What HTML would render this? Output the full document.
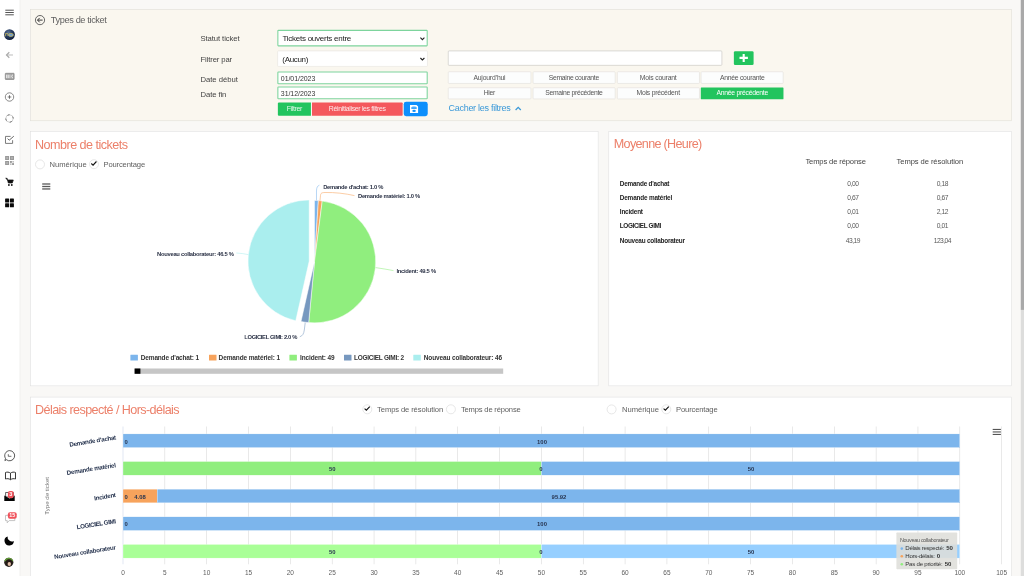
<!DOCTYPE html>
<html lang="fr"><head><meta charset="utf-8"><title>Types de ticket</title>
<style>
html,body{margin:0;padding:0;width:1024px;height:576px;overflow:hidden;background:#f9f8f6;}
body{font-family:"Liberation Sans",sans-serif;}
#app{position:absolute;left:0;top:0;width:1920px;height:1080px;transform:scale(0.533333);transform-origin:0 0;overflow:hidden;}
.t{position:absolute;white-space:pre;line-height:1;font-family:"Liberation Sans",sans-serif;will-change:opacity;}
.t.r{will-change:auto;}
.panel{position:absolute;background:#fff;border:1px solid #dcdcdc;box-sizing:border-box;}
.abs{position:absolute;}
svg{position:absolute;overflow:visible;}
</style></head>
<body>
<div id="app">
<div class="" style="position:absolute;left:0.0px;top:0.0px;width:38.06px;height:1080.0px;background:#fff;border-right:1px solid #e6e4e0;box-sizing:border-box;"></div><svg style="left:0;top:0" width="1920" height="1080" viewBox="0 0 1024 576"><defs><radialGradient id="gl" cx=".4" cy=".32" r=".75"><stop offset="0" stop-color="#5b7396"/><stop offset=".5" stop-color="#263b60"/><stop offset="1" stop-color="#0e1a33"/></radialGradient><clipPath id="av"><circle cx="8.8" cy="562.3" r="4.6"/></clipPath></defs><rect x="5.3" y="9.7" width="8.5" height="1" fill="#555"/><rect x="5.3" y="12.0" width="8.5" height="1" fill="#555"/><rect x="5.3" y="14.3" width="8.5" height="1" fill="#555"/><circle cx="9.5" cy="34.6" r="5.4" fill="url(#gl)"/><path d="M5.4 36.3V33.6H8.2M8.2 35H6.8" stroke="#d9c45a" stroke-width=".7" fill="none"/><ellipse cx="10.9" cy="34.9" rx="2.5" ry="1.5" fill="#6f9fd0" stroke="#d9c45a" stroke-width=".7"/><path d="M13 55 H6.6" stroke="#bdbdbd" stroke-width="1" fill="none"/><path d="M9.3 52.3 L6.5 55 L9.3 57.7" stroke="#aaa" stroke-width="1.2" fill="none"/><rect x="5.3" y="73.3" width="8.8" height="6.2" rx=".5" fill="#a4a4a4" stroke="#808080" stroke-width=".7"/><path d="M6.7 74.7V78.1M8.2 74.7V78.1" stroke="#fff" stroke-width=".85"/><path d="M9.9 74.7V78.1" stroke="#fff" stroke-width=".6"/><path d="M12.9 74.9C11.3 74.9 11.3 77.9 12.9 77.9" stroke="#fff" stroke-width=".8" fill="none"/><circle cx="9.5" cy="97" r="4.2" fill="none" stroke="#666" stroke-width=".75"/><path d="M9.5 95.2V98.8M7.7 97H11.3" stroke="#555" stroke-width=".8"/><circle cx="9.5" cy="118.5" r="3.7" fill="none" stroke="#bdbdbd" stroke-width=".7"/><circle cx="9.5" cy="118.5" r="3.7" fill="none" stroke="#6a6a6a" stroke-width="1" stroke-dasharray="2.1 3.712" stroke-dashoffset="2.49"/><path d="M12.6 140.2V143.4H5.5V136.4H10.6" fill="none" stroke="#666" stroke-width=".85"/><path d="M7.6 138.6l1.6 1.6L13.8 136.2" fill="none" stroke="#555" stroke-width=".9"/><g fill="#9a9a9a"><rect x="5.1" y="156" width="4" height="4"/><rect x="10" y="156" width="4" height="4"/><rect x="5.1" y="161" width="4" height="4"/><rect x="10" y="161" width="1.9" height="1.9"/><rect x="12.1" y="163.1" width="1.9" height="1.9"/><rect x="10" y="163.3" width="1.6" height="1.7" opacity=".6"/><rect x="12.3" y="161" width="1.7" height="1.6" opacity=".6"/></g><g fill="#bcbcbc"><rect x="6.3" y="157.2" width="1.6" height="1.6"/><rect x="11.2" y="157.2" width="1.6" height="1.6"/><rect x="6.3" y="162.2" width="1.6" height="1.6"/></g><path d="M5.7 178.3H7.1L8.3 183H12.3L13.3 180H7.6Z" fill="#111" stroke="#111" stroke-width=".7" stroke-linejoin="round"/><circle cx="8.9" cy="185" r=".9" fill="#111"/><circle cx="11.8" cy="185" r=".9" fill="#111"/><rect x="5.1" y="198.5" width="4" height="4" rx=".5" fill="#0a0a0a"/><rect x="9.9" y="198.5" width="4" height="4" rx=".5" fill="#0a0a0a"/><rect x="5.1" y="203.3" width="4" height="4" rx=".5" fill="#0a0a0a"/><rect x="9.9" y="203.3" width="4" height="4" rx=".5" fill="#0a0a0a"/><path d="M9.6 450.6a5.1 5.1 0 1 1 -3.2 9.1L4.9 460.6l.6-2.2A5.1 5.1 0 0 1 9.6 450.6Z" fill="#fff" stroke="#222" stroke-width=".75" stroke-linejoin="round"/><path d="M8.3 454.2V456.3H11.4" stroke="#333" stroke-width=".7" fill="none"/><path d="M10.5 473.2C9 471.9 7 471.9 5.5 472.5V479C7 478.5 9 478.5 10.5 479.7C12 478.5 14 478.5 15.5 479V472.5C14 471.9 12 471.9 10.5 473.2Z" fill="#fff" stroke="#222" stroke-width=".9" stroke-linejoin="round"/><path d="M10.5 473.2V479.7" stroke="#222" stroke-width=".9"/><path d="M5.6 492.5H13.4V497H5.6Z" fill="#fff" stroke="#222" stroke-width=".7"/><path d="M4.3 495.6L9.5 498.4L14.7 495.6V501.1H4.3Z" fill="#050505"/><rect x="7.9" y="491.1" width="5.8" height="7.1" rx="2" fill="#f0525b"/><path d="M5.5 515.4H14.8V520.6H9.2L7.2 522.8V520.6H5.5Z" fill="#fff" stroke="#b5b5b5" stroke-width=".8" stroke-linejoin="round"/><rect x="7.9" y="512.3" width="8.8" height="6.5" rx="2" fill="#f0525b"/><path d="M7.6 536.4A4.7 4.7 0 1 0 13.9 541A4.4 4.4 0 0 1 7.6 536.4Z" fill="#050505"/><g clip-path="url(#av)"><rect x="4" y="557" width="10" height="11" fill="#2b2420"/><rect x="4" y="557" width="10" height="4.2" fill="#5f9a36"/><circle cx="9" cy="562.6" r="3.3" fill="#241a16"/><ellipse cx="9.3" cy="564" rx="1.7" ry="2" fill="#e2bfa8"/></g></svg><span class="t" style="left:17.44px;top:921.91px;font-size:10.12px;font-weight:700;color:#fff;">3</span><span class="t" style="left:17.44px;top:961.10px;font-size:10.12px;font-weight:700;color:#fff;">15</span><div class="" style="position:absolute;left:56.62px;top:17.44px;width:1840.31px;height:209.81px;background:#faf7ef;border:1px solid #dddbd6;box-sizing:border-box;"></div><svg style="left:0;top:0" width="1920" height="1080" viewBox="0 0 1024 576"><circle cx="40" cy="20.1" r="4.6" fill="none" stroke="#444" stroke-width=".8"/><path d="M42.6 20.1H37.6M39.7 17.9L37.5 20.1L39.7 22.3" stroke="#333" stroke-width="1" fill="none"/></svg><span class="t" style="left:95.25px;top:30.43px;font-size:17.25px;letter-spacing:-0.708px;color:#606060;">Types de ticket</span><span class="t" style="left:375.94px;top:64.95px;font-size:14.44px;letter-spacing:-0.172px;color:#444;">Statut ticket</span><span class="t" style="left:375.94px;top:103.77px;font-size:14.44px;letter-spacing:-0.240px;color:#444;">Filtrer par</span><span class="t" style="left:375.94px;top:141.08px;font-size:14.44px;letter-spacing:-0.072px;color:#444;">Date début</span><span class="t" style="left:375.94px;top:168.64px;font-size:14.44px;letter-spacing:-0.178px;color:#444;">Date fin</span><div class="" style="position:absolute;left:520.12px;top:56.25px;width:282.38px;height:31.13px;background:#fff;border:2px solid #7dd49d;box-sizing:border-box;border-radius:2px;"></div><div class="" style="position:absolute;left:520.12px;top:95.25px;width:282.38px;height:29.62px;background:#fff;border:1px solid #e3e1dc;box-sizing:border-box;border-radius:2px;"></div><div class="" style="position:absolute;left:520.12px;top:133.5px;width:282.38px;height:24.38px;background:#fff;border:2px solid #7dd49d;box-sizing:border-box;border-radius:2px;"></div><div class="" style="position:absolute;left:520.12px;top:161.62px;width:282.38px;height:24.38px;background:#fff;border:2px solid #7dd49d;box-sizing:border-box;border-radius:2px;"></div><span class="t" style="left:529.69px;top:64.46px;font-size:15.00px;letter-spacing:-0.487px;color:#222;">Tickets ouverts entre</span><span class="t" style="left:529.31px;top:103.46px;font-size:15.00px;letter-spacing:-0.607px;color:#222;">(Aucun)</span><span class="t" style="left:526.50px;top:140.47px;font-size:13.12px;letter-spacing:-0.094px;color:#333;">01/01/2023</span><span class="t" style="left:526.50px;top:168.60px;font-size:13.12px;letter-spacing:-0.094px;color:#333;">31/12/2023</span><svg style="left:0;top:0" width="1920" height="1080" viewBox="0 0 1024 576"><path d="M420.4 37.6l2 2 2-2M420.4 58l2 2 2-2" stroke="#222" stroke-width="1.1" fill="none"/></svg><div class="" style="position:absolute;left:520.5px;top:191.62px;width:62.62px;height:25.87px;background:#22c45e;border-radius:2px 0 0 2px;"></div><div class="" style="position:absolute;left:584.62px;top:191.62px;width:170.62px;height:25.87px;background:#f4585c;border-radius:0 1.5px 1.5px 0;"></div><div class="" style="position:absolute;left:757.12px;top:191.25px;width:44.44px;height:26.25px;background:#0d8ffc;border-radius:4.5px;"></div><span class="t" style="left:537.61px;top:198.33px;font-size:12.94px;letter-spacing:-0.647px;color:rgba(255,255,255,.88);">Filtrer</span><span class="t" style="left:616.44px;top:198.33px;font-size:12.94px;letter-spacing:-0.598px;color:rgba(255,255,255,.88);">Réinitialiser les filtres</span><svg style="left:0;top:0" width="1920" height="1080" viewBox="0 0 1024 576"><path d="M410 105h6.5l1.6 1.6v6.4h-8.1z" fill="#fff"/><rect x="411.3" y="107.3" width="5.4" height="1.5" fill="#0d8ffc"/><rect x="412.3" y="106.2" width="3.4" height="1.1" fill="#0d8ffc" opacity=".45"/><ellipse cx="414.05" cy="110.95" rx="1.75" ry="1.15" fill="#0d8ffc"/></svg><div class="" style="position:absolute;left:840.0px;top:94.88px;width:513.75px;height:28.12px;background:#fff;border:1.5px solid #bdbbb7;box-sizing:border-box;border-radius:2px;"></div><div class="" style="position:absolute;left:1376.06px;top:95.72px;width:37.13px;height:26.16px;background:#22c45e;border-radius:2.5px;"></div><svg style="left:0;top:0" width="1920" height="1080" viewBox="0 0 1024 576"><path d="M743.7 53.9v8M739.5 57.9h8.4" stroke="#fff" stroke-width="2.1"/></svg><div class="" style="position:absolute;left:840.0px;top:134.06px;width:155.62px;height:22.69px;background:#fcfdfd;border:1px solid #dedcd8;box-sizing:border-box;border-radius:2px;"></div><span class="t" style="left:887.64px;top:140.12px;font-size:12.75px;letter-spacing:-0.345px;color:#555;">Aujourd’hui</span><div class="" style="position:absolute;left:840.0px;top:163.5px;width:155.62px;height:22.88px;background:#fcfdfd;border:1px solid #dedcd8;box-sizing:border-box;border-radius:2px;"></div><span class="t" style="left:907.15px;top:168.99px;font-size:12.75px;letter-spacing:-0.691px;color:#555;">Hier</span><div class="" style="position:absolute;left:999.0px;top:134.06px;width:154.5px;height:22.69px;background:#fcfdfd;border:1px solid #dedcd8;box-sizing:border-box;border-radius:2px;"></div><span class="t" style="left:1029.07px;top:140.12px;font-size:12.75px;letter-spacing:-0.608px;color:#555;">Semaine courante</span><div class="" style="position:absolute;left:999.0px;top:163.5px;width:154.5px;height:22.88px;background:#fcfdfd;border:1px solid #dedcd8;box-sizing:border-box;border-radius:2px;"></div><span class="t" style="left:1022.29px;top:168.99px;font-size:12.75px;letter-spacing:-0.574px;color:#555;">Semaine précédente</span><div class="" style="position:absolute;left:1156.88px;top:134.06px;width:154.88px;height:22.69px;background:#fcfdfd;border:1px solid #dedcd8;box-sizing:border-box;border-radius:2px;"></div><span class="t" style="left:1199.69px;top:140.12px;font-size:12.75px;letter-spacing:-0.341px;color:#555;">Mois courant</span><div class="" style="position:absolute;left:1156.88px;top:163.5px;width:154.88px;height:22.88px;background:#fcfdfd;border:1px solid #dedcd8;box-sizing:border-box;border-radius:2px;"></div><span class="t" style="left:1193.55px;top:168.99px;font-size:12.75px;letter-spacing:-0.434px;color:#555;">Mois précédent</span><div class="" style="position:absolute;left:1314.38px;top:134.06px;width:154.88px;height:22.69px;background:#fcfdfd;border:1px solid #dedcd8;box-sizing:border-box;border-radius:2px;"></div><span class="t" style="left:1349.86px;top:140.12px;font-size:12.75px;letter-spacing:-0.471px;color:#555;">Année courante</span><div class="" style="position:absolute;left:1314.38px;top:163.5px;width:154.88px;height:22.5px;background:#22c45e;border-radius:1px;"></div><span class="t" style="left:1343.29px;top:168.99px;font-size:12.75px;letter-spacing:-0.479px;color:#fff;">Année précédente</span><span class="t" style="left:840.94px;top:194.89px;font-size:16.88px;letter-spacing:-0.517px;color:#3b99d8;">Cacher les filtres</span><svg style="left:0;top:0" width="1920" height="1080" viewBox="0 0 1024 576"><path d="M515.6 110l2.6-2.6 2.6 2.6" stroke="#3b99d8" stroke-width="1.3" fill="none"/></svg><div class="panel" style="position:absolute;left:56.62px;top:246.0px;width:1065.75px;height:478.12px;"></div><span class="t" style="left:65.62px;top:259.68px;font-size:23.62px;letter-spacing:-0.990px;color:#ec806a;">Nombre de tickets</span><svg style="left:0;top:0" width="1920" height="1080" viewBox="0 0 1024 576"><circle cx="40" cy="164.4" r="4.5" fill="#fff" stroke="#dcdcdc" stroke-width=".7"/><circle cx="94" cy="164.2" r="4.5" fill="#fff" stroke="#dcdcdc" stroke-width=".7"/><path d="M91.3 163.5l1.75 1.6 3.4-3.6" stroke="#111" stroke-width="1.15" fill="none"/></svg><span class="t" style="left:92.81px;top:301.49px;font-size:14.25px;letter-spacing:0.016px;color:#5e5e5e;">Numérique</span><span class="t" style="left:194.06px;top:301.49px;font-size:14.25px;letter-spacing:-0.273px;color:#5e5e5e;">Pourcentage</span><svg style="left:0;top:0" width="1920" height="1080" viewBox="0 0 1024 576"><rect x="42.2" y="183.35" width="8.1" height="1.3" fill="#5a5a5a"/><rect x="42.2" y="185.85" width="8.1" height="1.3" fill="#5a5a5a"/><rect x="42.2" y="188.29999999999998" width="8.1" height="1.3" fill="#5a5a5a"/><path d="M314.50 261.70L314.50 200.50A61.2 61.2 0 0 1 318.38 200.62Z" fill="#7cb5ec" stroke="#fff" stroke-width=".5" stroke-linejoin="round"/><path d="M314.50 261.70L318.38 200.62A61.2 61.2 0 0 1 322.25 200.99Z" fill="#f7a35c" stroke="#fff" stroke-width=".5" stroke-linejoin="round"/><path d="M314.50 261.70L322.25 200.99A61.2 61.2 0 0 1 308.68 322.62Z" fill="#90ee7e" stroke="#fff" stroke-width=".5" stroke-linejoin="round"/><path d="M314.50 261.70L308.68 322.62A61.2 61.2 0 0 1 301.02 321.40Z" fill="#7798bf" stroke="#fff" stroke-width=".5" stroke-linejoin="round"/><path d="M309.20 261.11L295.72 320.81A61.2 61.2 0 0 1 309.20 199.91Z" fill="#aaeeee" stroke="#fff" stroke-width=".5" stroke-linejoin="round"/><path d="M316.5 200.4V191C316.5 187.5 317.5 185.8 319.4 185.2" stroke="#7cb5ec" stroke-width=".55" fill="none"/><path d="M320 200.6L320.5 195.5C320.7 193.2 321.5 192.6 325 192.5C335 192.3 345 193.5 354.5 195.6" stroke="#f7a35c" stroke-width=".55" fill="none"/><path d="M375.6 267.6C382 268.6 388 269.5 393.5 270.6" stroke="#90ee7e" stroke-width=".55" fill="none"/><path d="M305.2 322.8L304.3 330C303.8 333.8 302.6 335.8 299.8 336.8" stroke="#7798bf" stroke-width=".55" fill="none"/><path d="M236.3 253C240.5 253.2 244.5 253.8 248.3 254.6" stroke="#aaeeee" stroke-width=".55" fill="none"/><rect x="130.4" y="354.8" width="7.5" height="5.8" rx=".3" fill="#7cb5ec"/><rect x="209" y="354.8" width="7.5" height="5.8" rx=".3" fill="#f7a35c"/><rect x="289.4" y="354.8" width="7.5" height="5.8" rx=".3" fill="#90ee7e"/><rect x="344" y="354.8" width="7.5" height="5.8" rx=".3" fill="#7798bf"/><rect x="413.3" y="354.8" width="7.5" height="5.8" rx=".3" fill="#aaeeee"/><rect x="134.6" y="368.5" width="368.6" height="5.3" fill="#c6c6c6"/><rect x="134.6" y="368.5" width="5.8" height="5.3" fill="#000"/></svg><span class="t" style="left:606.00px;top:345.13px;font-size:10.88px;font-weight:700;letter-spacing:-0.535px;color:#2a3145;">Demande d'achat: 1.0 %</span><span class="t" style="left:671.25px;top:362.75px;font-size:10.88px;font-weight:700;letter-spacing:-0.525px;color:#2a3145;">Demande matériel: 1.0 %</span><span class="t" style="left:743.44px;top:503.19px;font-size:10.88px;font-weight:700;letter-spacing:-0.536px;color:#2a3145;">Incident: 49.5 %</span><span class="t" style="left:458.06px;top:626.75px;font-size:10.88px;font-weight:700;letter-spacing:-0.670px;color:#2a3145;">LOGICIEL GIMI: 2.0 %</span><span class="t" style="left:294.38px;top:471.13px;font-size:10.88px;font-weight:700;letter-spacing:-0.506px;color:#2a3145;">Nouveau collaborateur: 46.5 %</span><span class="t" style="left:264.00px;top:665.42px;font-size:12.19px;font-weight:700;letter-spacing:-0.320px;color:#333;">Demande d'achat: 1</span><span class="t" style="left:409.88px;top:665.42px;font-size:12.19px;font-weight:700;letter-spacing:-0.227px;color:#333;">Demande matériel: 1</span><span class="t" style="left:562.50px;top:665.42px;font-size:12.19px;font-weight:700;letter-spacing:-0.262px;color:#333;">Incident: 49</span><span class="t" style="left:663.75px;top:665.42px;font-size:12.19px;font-weight:700;letter-spacing:-0.502px;color:#333;">LOGICIEL GIMI: 2</span><span class="t" style="left:794.62px;top:665.42px;font-size:12.19px;font-weight:700;letter-spacing:-0.265px;color:#333;">Nouveau collaborateur: 46</span><div class="panel" style="position:absolute;left:1141.12px;top:246.0px;width:755.81px;height:478.12px;"></div><span class="t" style="left:1150.88px;top:259.31px;font-size:23.62px;letter-spacing:-1.285px;color:#ec806a;">Moyenne (Heure)</span><span class="t" style="left:1510.12px;top:294.93px;font-size:14.25px;letter-spacing:-0.250px;color:#444;">Temps de réponse</span><span class="t" style="left:1680.94px;top:294.93px;font-size:14.25px;letter-spacing:-0.140px;color:#444;">Temps de résolution</span><span class="t" style="left:1162.12px;top:337.77px;font-size:12.00px;font-weight:700;letter-spacing:-0.418px;color:#222;">Demande d'achat</span><span class="t" style="left:1588.68px;top:337.84px;font-size:12.56px;letter-spacing:-0.762px;color:#5a5a5a;">0,00</span><span class="t" style="left:1756.31px;top:337.84px;font-size:12.56px;letter-spacing:-0.762px;color:#5a5a5a;">0,18</span><span class="t" style="left:1162.12px;top:364.58px;font-size:12.00px;font-weight:700;letter-spacing:-0.333px;color:#222;">Demande matériel</span><span class="t" style="left:1588.68px;top:364.65px;font-size:12.56px;letter-spacing:-0.762px;color:#5a5a5a;">0,67</span><span class="t" style="left:1756.31px;top:364.65px;font-size:12.56px;letter-spacing:-0.762px;color:#5a5a5a;">0,67</span><span class="t" style="left:1162.12px;top:391.58px;font-size:12.00px;font-weight:700;letter-spacing:-0.361px;color:#222;">Incident</span><span class="t" style="left:1588.68px;top:391.65px;font-size:12.56px;letter-spacing:-0.762px;color:#5a5a5a;">0,01</span><span class="t" style="left:1756.31px;top:391.65px;font-size:12.56px;letter-spacing:-0.762px;color:#5a5a5a;">2,12</span><span class="t" style="left:1162.12px;top:418.39px;font-size:12.00px;font-weight:700;letter-spacing:-0.656px;color:#222;">LOGICIEL GIMI</span><span class="t" style="left:1588.68px;top:418.47px;font-size:12.56px;letter-spacing:-0.762px;color:#5a5a5a;">0,00</span><span class="t" style="left:1756.31px;top:418.47px;font-size:12.56px;letter-spacing:-0.762px;color:#5a5a5a;">0,01</span><span class="t" style="left:1162.12px;top:445.77px;font-size:12.00px;font-weight:700;letter-spacing:-0.388px;color:#222;">Nouveau collaborateur</span><span class="t" style="left:1585.92px;top:445.84px;font-size:12.56px;letter-spacing:-0.938px;color:#5a5a5a;">43,19</span><span class="t" style="left:1750.82px;top:445.84px;font-size:12.56px;letter-spacing:-1.055px;color:#5a5a5a;">123,04</span><div class="panel" style="position:absolute;left:56.62px;top:743.81px;width:1840.31px;height:381.19px;"></div><span class="t" style="left:65.62px;top:756.55px;font-size:23.62px;letter-spacing:-1.096px;color:#ec806a;">Délais respecté / Hors-délais</span><svg style="left:0;top:0" width="1920" height="1080" viewBox="0 0 1024 576"><circle cx="367.3" cy="409.3" r="4.5" fill="#fff" stroke="#dcdcdc" stroke-width=".7"/><path d="M364.6 408.6l1.75 1.6 3.4-3.6" stroke="#111" stroke-width="1.15" fill="none"/><circle cx="450.9" cy="409.3" r="4.5" fill="#fff" stroke="#dcdcdc" stroke-width=".7"/><circle cx="611.6" cy="409.4" r="4.5" fill="#fff" stroke="#dcdcdc" stroke-width=".7"/><circle cx="666.3" cy="409.3" r="4.5" fill="#fff" stroke="#dcdcdc" stroke-width=".7"/><path d="M663.5999999999999 408.6l1.75 1.6 3.4-3.6" stroke="#111" stroke-width="1.15" fill="none"/></svg><span class="t" style="left:707.06px;top:759.55px;font-size:14.25px;letter-spacing:-0.199px;color:#5e5e5e;">Temps de résolution</span><span class="t" style="left:864.19px;top:759.55px;font-size:14.25px;letter-spacing:-0.332px;color:#5e5e5e;">Temps de réponse</span><span class="t" style="left:1166.25px;top:759.55px;font-size:14.25px;letter-spacing:-0.057px;color:#5e5e5e;">Numérique</span><span class="t" style="left:1267.69px;top:759.55px;font-size:14.25px;letter-spacing:-0.290px;color:#5e5e5e;">Pourcentage</span><svg style="left:0;top:0" width="1920" height="1080" viewBox="0 0 1024 576"><rect x="122.73" y="426.5" width=".54" height="137.8" fill="#c6d2ea"/><rect x="164.57" y="426.5" width=".54" height="137.8" fill="#d6d6d6"/><rect x="206.41" y="426.5" width=".54" height="137.8" fill="#d6d6d6"/><rect x="248.25" y="426.5" width=".54" height="137.8" fill="#d6d6d6"/><rect x="290.09" y="426.5" width=".54" height="137.8" fill="#d6d6d6"/><rect x="331.93" y="426.5" width=".54" height="137.8" fill="#d6d6d6"/><rect x="373.77" y="426.5" width=".54" height="137.8" fill="#d6d6d6"/><rect x="415.61" y="426.5" width=".54" height="137.8" fill="#d6d6d6"/><rect x="457.45" y="426.5" width=".54" height="137.8" fill="#d6d6d6"/><rect x="499.29" y="426.5" width=".54" height="137.8" fill="#d6d6d6"/><rect x="541.13" y="426.5" width=".54" height="137.8" fill="#d6d6d6"/><rect x="582.97" y="426.5" width=".54" height="137.8" fill="#d6d6d6"/><rect x="624.81" y="426.5" width=".54" height="137.8" fill="#d6d6d6"/><rect x="666.65" y="426.5" width=".54" height="137.8" fill="#d6d6d6"/><rect x="708.49" y="426.5" width=".54" height="137.8" fill="#d6d6d6"/><rect x="750.33" y="426.5" width=".54" height="137.8" fill="#d6d6d6"/><rect x="792.17" y="426.5" width=".54" height="137.8" fill="#d6d6d6"/><rect x="834.01" y="426.5" width=".54" height="137.8" fill="#d6d6d6"/><rect x="875.85" y="426.5" width=".54" height="137.8" fill="#d6d6d6"/><rect x="917.69" y="426.5" width=".54" height="137.8" fill="#d6d6d6"/><rect x="959.53" y="426.5" width=".54" height="137.8" fill="#d6d6d6"/><rect x="1001.37" y="426.5" width=".54" height="137.8" fill="#d6d6d6"/><rect x="123.00" y="433.9" width="836.80" height="13.7" fill="#7cb5ec" stroke="#fff" stroke-width=".3"/><rect x="123.00" y="461.5" width="418.40" height="13.7" fill="#90ee7e" stroke="#fff" stroke-width=".3"/><rect x="541.40" y="461.5" width="418.40" height="13.7" fill="#7cb5ec" stroke="#fff" stroke-width=".3"/><rect x="123.00" y="489.15" width="34.14" height="13.7" fill="#f7a35c" stroke="#fff" stroke-width=".3"/><rect x="157.14" y="489.15" width="802.66" height="13.7" fill="#7cb5ec" stroke="#fff" stroke-width=".3"/><rect x="123.00" y="516.8" width="836.80" height="13.7" fill="#7cb5ec" stroke="#fff" stroke-width=".3"/><rect x="123.00" y="544.4" width="418.40" height="13.7" fill="#a9ff97" stroke="#fff" stroke-width=".3"/><rect x="541.40" y="544.4" width="418.40" height="13.7" fill="#96cfff" stroke="#fff" stroke-width=".3"/><rect x="992.7" y="428.9" width="8.2" height="1.1" fill="#555"/><rect x="992.7" y="431.4" width="8.2" height="1.1" fill="#555"/><rect x="992.7" y="433.9" width="8.2" height="1.1" fill="#555"/><rect x="896.4" y="532.4" width="60.8" height="36.8" rx=".8" fill="#dededa" fill-opacity=".88"/><circle cx="901.8" cy="548.6" r="1.3" fill="#7cb5ec"/><circle cx="901.8" cy="556.3000000000001" r="1.3" fill="#f7a35c"/><circle cx="901.8" cy="564.2" r="1.3" fill="#90ee7e"/></svg><span class="t" style="left:227.23px;top:1068.54px;font-size:12.19px;color:#606060;">0</span><span class="t" style="left:305.68px;top:1068.54px;font-size:12.19px;color:#606060;">5</span><span class="t" style="left:380.75px;top:1068.54px;font-size:12.19px;color:#606060;">10</span><span class="t" style="left:459.20px;top:1068.54px;font-size:12.19px;color:#606060;">15</span><span class="t" style="left:537.65px;top:1068.54px;font-size:12.19px;color:#606060;">20</span><span class="t" style="left:616.10px;top:1068.54px;font-size:12.19px;color:#606060;">25</span><span class="t" style="left:694.55px;top:1068.54px;font-size:12.19px;color:#606060;">30</span><span class="t" style="left:773.00px;top:1068.54px;font-size:12.19px;color:#606060;">35</span><span class="t" style="left:851.45px;top:1068.54px;font-size:12.19px;color:#606060;">40</span><span class="t" style="left:929.90px;top:1068.54px;font-size:12.19px;color:#606060;">45</span><span class="t" style="left:1008.35px;top:1068.54px;font-size:12.19px;color:#606060;">50</span><span class="t" style="left:1086.80px;top:1068.54px;font-size:12.19px;color:#606060;">55</span><span class="t" style="left:1165.25px;top:1068.54px;font-size:12.19px;color:#606060;">60</span><span class="t" style="left:1243.70px;top:1068.54px;font-size:12.19px;color:#606060;">65</span><span class="t" style="left:1322.15px;top:1068.54px;font-size:12.19px;color:#606060;">70</span><span class="t" style="left:1400.60px;top:1068.54px;font-size:12.19px;color:#606060;">75</span><span class="t" style="left:1479.05px;top:1068.54px;font-size:12.19px;color:#606060;">80</span><span class="t" style="left:1557.50px;top:1068.54px;font-size:12.19px;color:#606060;">85</span><span class="t" style="left:1635.95px;top:1068.54px;font-size:12.19px;color:#606060;">90</span><span class="t" style="left:1714.40px;top:1068.54px;font-size:12.19px;color:#606060;">95</span><span class="t" style="left:1789.47px;top:1068.54px;font-size:12.19px;color:#606060;">100</span><span class="t" style="left:1867.92px;top:1068.54px;font-size:12.19px;color:#606060;">105</span><span class="t r" style="left:128.50px;top:814.12px;font-size:11.62px;font-weight:700;letter-spacing:-0.503px;color:#27344f;transform:rotate(-9deg);transform-origin:100% 50%;">Demande d'achat</span><span class="t r" style="left:123.86px;top:866.06px;font-size:11.62px;font-weight:700;letter-spacing:-0.450px;color:#27344f;transform:rotate(-9deg);transform-origin:100% 50%;">Demande matériel</span><span class="t r" style="left:175.96px;top:921.84px;font-size:11.62px;font-weight:700;letter-spacing:-0.479px;color:#27344f;transform:rotate(-9deg);transform-origin:100% 50%;">Incident</span><span class="t r" style="left:142.89px;top:971.06px;font-size:11.62px;font-weight:700;letter-spacing:-0.731px;color:#27344f;transform:rotate(-9deg);transform-origin:100% 50%;">LOGICIEL GIMI</span><span class="t r" style="left:99.88px;top:1019.81px;font-size:11.62px;font-weight:700;letter-spacing:-0.429px;color:#27344f;transform:rotate(-9deg);transform-origin:100% 50%;">Nouveau collaborateur</span><span class="t r" style="left:52.17px;top:923.62px;font-size:11.62px;letter-spacing:-0.095px;color:#777;transform:rotate(-90deg);transform-origin:100% 50%;transform-origin:50% 50%;">Type de ticket</span><span class="t" style="left:233.55px;top:822.59px;font-size:11.06px;font-weight:700;color:#27344f;">0</span><span class="t" style="left:1007.03px;top:822.59px;font-size:11.06px;font-weight:700;color:#27344f;">100</span><span class="t" style="left:616.91px;top:873.96px;font-size:11.06px;font-weight:700;color:#27344f;">50</span><span class="t" style="left:1011.30px;top:873.96px;font-size:11.06px;font-weight:700;color:#27344f;">0</span><span class="t" style="left:1401.98px;top:873.96px;font-size:11.06px;font-weight:700;color:#27344f;">50</span><span class="t" style="left:233.55px;top:925.71px;font-size:11.06px;font-weight:700;color:#27344f;">0</span><span class="t" style="left:251.74px;top:925.71px;font-size:11.06px;font-weight:700;color:#27344f;">4.08</span><span class="t" style="left:1034.30px;top:925.71px;font-size:11.06px;font-weight:700;color:#27344f;">95.92</span><span class="t" style="left:233.55px;top:977.46px;font-size:11.06px;font-weight:700;color:#27344f;">0</span><span class="t" style="left:1007.03px;top:977.46px;font-size:11.06px;font-weight:700;color:#27344f;">100</span><span class="t" style="left:616.91px;top:1029.21px;font-size:11.06px;font-weight:700;color:#27344f;">50</span><span class="t" style="left:1011.30px;top:1029.21px;font-size:11.06px;font-weight:700;color:#27344f;">0</span><span class="t" style="left:1401.98px;top:1029.21px;font-size:11.06px;font-weight:700;color:#27344f;">50</span><span class="t" style="left:1687.50px;top:1009.28px;font-size:10.12px;letter-spacing:-0.505px;color:#555;">Nouveau collaborateur</span><span class="t" style="left:1697.44px;top:1022.64px;font-size:11.44px;letter-spacing:-0.596px;color:#333;">Délais respecté:</span><span class="t" style="left:1774.31px;top:1022.64px;font-size:11.44px;font-weight:700;letter-spacing:-0.172px;color:#333;">50</span><span class="t" style="left:1697.44px;top:1037.26px;font-size:11.44px;letter-spacing:-0.484px;color:#333;">Hors-délais:</span><span class="t" style="left:1756.31px;top:1037.26px;font-size:11.44px;font-weight:700;letter-spacing:-0.172px;color:#333;">0</span><span class="t" style="left:1697.44px;top:1051.89px;font-size:11.44px;letter-spacing:-0.466px;color:#333;">Pas de priorité:</span><span class="t" style="left:1771.31px;top:1051.89px;font-size:11.44px;font-weight:700;letter-spacing:-0.172px;color:#333;">50</span><div class="" style="position:absolute;left:1914.38px;top:0.0px;width:5.62px;height:1080.0px;background:#dddddc;"></div><div class="" style="position:absolute;left:1914.38px;top:0.0px;width:5.62px;height:580.88px;background:#a9a9a9;"></div>
</div>
</body></html>
